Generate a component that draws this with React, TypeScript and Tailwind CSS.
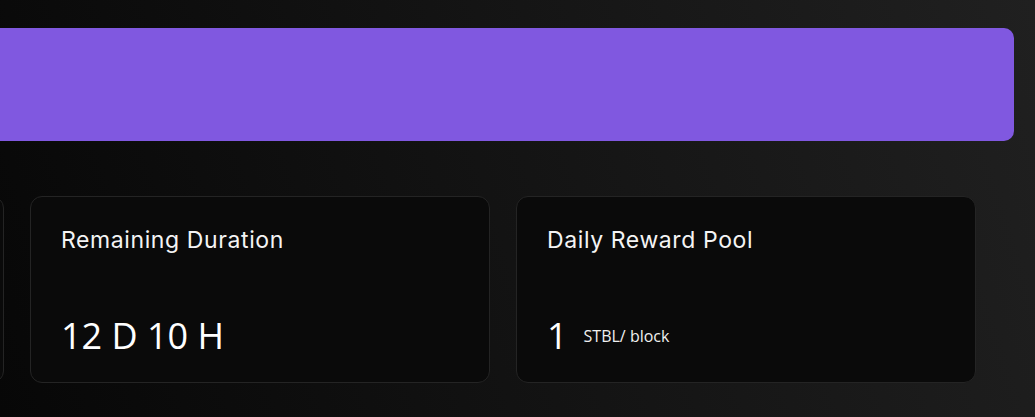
const stats = [
  { title: 'Total Staked', value: '0', unit: 'STBL' },
  { title: 'Remaining Duration', value: '12 D 10 H', unit: '' },
  { title: 'Daily Reward Pool', value: '1', unit: 'STBL/ block' },
];

export default function App() {
  return (
    <div className="min-h-screen w-full overflow-hidden bg-linear-[72deg] from-[#070707] to-[#202020] pt-[28px]">
      <div className="ml-[-456px] flex flex-col">
        <div className="h-[113px] w-[1470px] rounded-[10px] bg-[#8058e0]" />

        <div className="mt-[55px] flex gap-[26px]">
          {stats.map((s) => (
            <div
              key={s.title}
              className="flex h-[187px] w-[460px] shrink-0 flex-col justify-between rounded-[12px] border border-[#242424] bg-[#0a0a0a] px-[30px] pt-[28px] pb-[22px]"
            >
              <h3 className="font-['Inter',sans-serif] text-[23px] leading-[30px] font-normal tracking-[0.6px] text-[#f4f4f4]">
                {s.title}
              </h3>
              <div className="flex items-center gap-[16px] font-['Open_Sans',sans-serif] text-white">
                <span className="text-[36px] leading-[48px]">{s.value}</span>
                {s.unit && <span className="text-[16px] leading-[22px] text-[#f0f0f0]">{s.unit}</span>}
              </div>
            </div>
          ))}
        </div>
      </div>
    </div>
  );
}
